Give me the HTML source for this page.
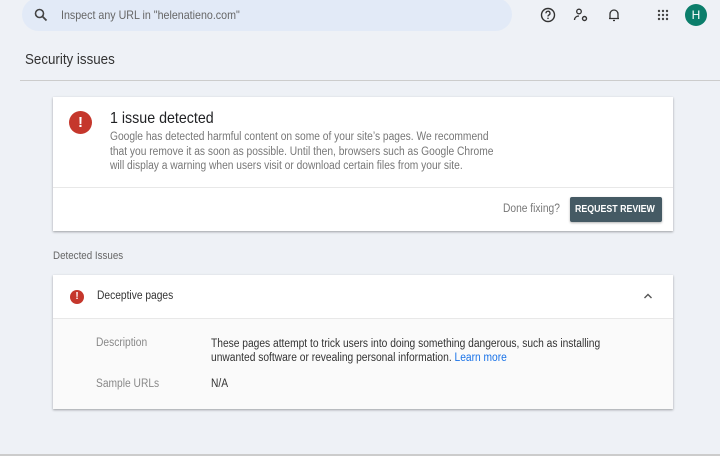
<!DOCTYPE html>
<html><head><meta charset="utf-8"><style>
*{margin:0;padding:0;box-sizing:border-box}
body{width:720px;height:456px;background:#eef1f6;font-family:"Liberation Sans",sans-serif;position:relative;overflow:hidden;color:#202124}
.a{position:absolute;white-space:nowrap}
.c{display:inline-block;transform:scaleX(.89);transform-origin:0 0}
.card{position:absolute;left:53px;width:620px;background:#fff;box-shadow:0 1px 2px rgba(0,0,0,.25),0 1px 3px rgba(0,0,0,.1)}
</style></head><body>
<div class="a" style="left:22px;top:-2px;width:490px;height:33px;background:#e2eaf7;border-radius:17px"></div>
<svg class="a" style="left:34px;top:8px" width="14" height="14" viewBox="0 0 14 14"><circle cx="5.5" cy="5.5" r="4" fill="none" stroke="#444" stroke-width="1.6"/><path d="M8.5 8.5L12.5 12.5" stroke="#444" stroke-width="1.8"/></svg>
<div class="a" style="left:61px;top:8px;font-size:12px;color:#666"><span class="c">Inspect any URL in "helenatieno.com"</span></div>
<svg class="a" style="left:540px;top:7px" width="16" height="16" viewBox="0 0 16 16"><circle cx="8" cy="8" r="6.5" fill="none" stroke="#333" stroke-width="1.4"/><path d="M6 6.3a2 2 0 1 1 2.7 1.8c-.6.3-.7.7-.7 1.4" fill="none" stroke="#333" stroke-width="1.3"/><circle cx="8" cy="11.3" r=".8" fill="#333"/></svg>
<svg class="a" style="left:573px;top:7px" width="16" height="16" viewBox="0 0 16 16"><circle cx="6" cy="4.5" r="2.3" fill="none" stroke="#333" stroke-width="1.3"/><path d="M1.5 13c0-2.5 2-4 4.5-4" fill="none" stroke="#333" stroke-width="1.3"/><circle cx="11.5" cy="11.5" r="2" fill="none" stroke="#333" stroke-width="1.4"/></svg>
<svg class="a" style="left:606px;top:7px" width="16" height="16" viewBox="0 0 16 16"><path d="M4 11.5V7a4 4 0 0 1 8 0v4.5H4zM3 11.5h10M7 13.5h2" fill="none" stroke="#333" stroke-width="1.3"/></svg>
<svg class="a" style="left:657px;top:9px" width="12" height="12" viewBox="0 0 12 12" fill="#444"><circle cx="2" cy="2" r="1.2"/><circle cx="6" cy="2" r="1.2"/><circle cx="10" cy="2" r="1.2"/><circle cx="2" cy="6" r="1.2"/><circle cx="6" cy="6" r="1.2"/><circle cx="10" cy="6" r="1.2"/><circle cx="2" cy="10" r="1.2"/><circle cx="6" cy="10" r="1.2"/><circle cx="10" cy="10" r="1.2"/></svg>
<div class="a" style="left:685px;top:4px;width:22px;height:22px;border-radius:50%;background:#0b7e6b;color:#fff;font-size:12px;text-align:center;line-height:22px">H</div>
<div class="a" style="left:25px;top:51px;font-size:15px;color:#333"><span class="c">Security issues</span></div>
<div class="a" style="left:20px;top:80px;width:700px;height:1px;background:#ccc"></div>

<div class="card" style="top:97px;height:134px"></div>
<div class="a" style="left:69px;top:111px;width:23px;height:23px;border-radius:50%;background:#c5372c;color:#fff;font-weight:bold;font-size:15px;text-align:center;line-height:23px">!</div>
<div class="a" style="left:110px;top:110px;font-size:16px;color:#202124"><span class="c">1 issue detected</span></div>
<div class="a" style="left:110px;top:130px;font-size:11.5px;line-height:14.5px;color:#777"><span class="c">Google has detected harmful content on some of your site’s pages. We recommend<br>that you remove it as soon as possible. Until then, browsers such as Google Chrome<br>will display a warning when users visit or download certain files from your site.</span></div>
<div class="a" style="left:53px;top:187px;width:620px;height:1px;background:#e8e8e8"></div>
<div class="a" style="left:503px;top:203px;font-size:11.5px;color:#777"><span class="c">Done fixing?</span></div>
<div class="a" style="left:570px;top:197px;width:92px;height:25px;background:#455a64;border-radius:2px;box-shadow:0 1px 2px rgba(0,0,0,.3);color:#fff;font-size:10.5px;font-weight:bold;line-height:25px;padding-left:5px"><span style="display:inline-block;transform:scaleX(.84);transform-origin:0 0">REQUEST REVIEW</span></div>

<div class="a" style="left:53px;top:250px;font-size:11px;color:#666"><span class="c">Detected Issues</span></div>
<div class="card" style="top:275px;height:134px;background:#fafafa"></div>
<div class="a" style="left:53px;top:275px;width:620px;height:44px;background:#fff;border-bottom:1px solid #e8e8e8"></div>
<div class="a" style="left:70px;top:290px;width:14px;height:14px;border-radius:50%;background:#c5372c;color:#fff;font-weight:bold;font-size:10px;text-align:center;line-height:14px">!</div>
<div class="a" style="left:97px;top:290px;font-size:11.5px;color:#333"><span class="c">Deceptive pages</span></div>
<svg class="a" style="left:643px;top:292px" width="10" height="8" viewBox="0 0 10 8"><path d="M1.5 6L5 2.5 8.5 6" fill="none" stroke="#555" stroke-width="1.4"/></svg>
<div class="a" style="left:96px;top:337px;font-size:11.5px;color:#888"><span class="c">Description</span></div>
<div class="a" style="left:211px;top:337px;font-size:11.5px;line-height:14px;color:#333"><span class="c">These pages attempt to trick users into doing something dangerous, such as installing<br>unwanted software or revealing personal information. <span style="color:#1a73e8">Learn more</span></span></div>
<div class="a" style="left:96px;top:378px;font-size:11.5px;color:#888"><span class="c">Sample URLs</span></div>
<div class="a" style="left:211px;top:378px;font-size:11.5px;color:#333"><span class="c">N/A</span></div>
<div class="a" style="left:0;top:454px;width:720px;height:2px;background:#ccc"></div>
</body></html>
